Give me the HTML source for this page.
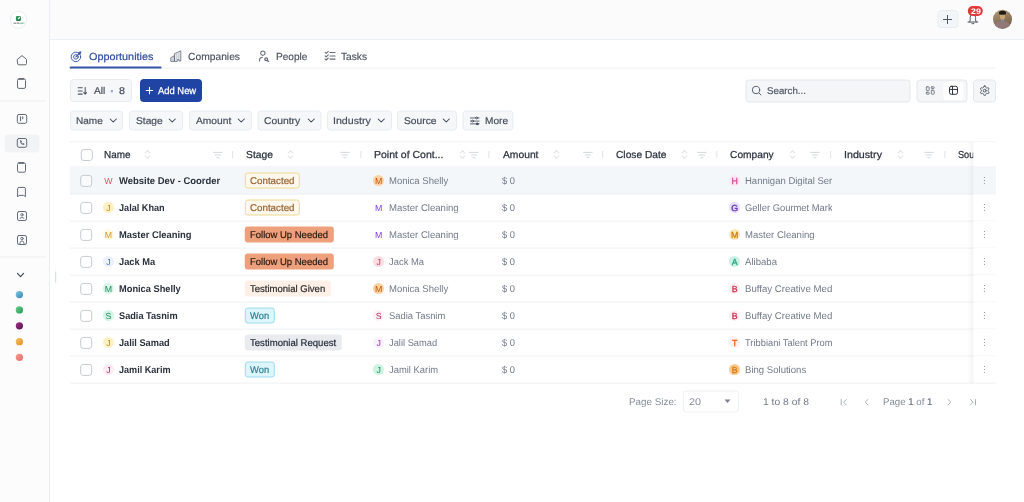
<!DOCTYPE html>
<html lang="en"><head><meta charset="utf-8"><title>Opportunities</title>
<style>
*{box-sizing:border-box;margin:0;padding:0}
html,body{width:1024px;height:502px;overflow:hidden;background:#fff}
body{position:relative;text-rendering:geometricPrecision;font-family:"Liberation Sans",Arial,sans-serif;font-size:10.2px;color:#1f2937}
.b{position:absolute;display:block}
.t{position:absolute;display:block;white-space:nowrap;line-height:14px;height:14px}
#root{position:absolute;left:0;top:0;width:1024px;height:502px;will-change:transform}
</style></head><body><div id="root">
<div class="b" style="left:50px;top:0px;width:974.00px;height:40.00px;background:#fbfbfb;border-bottom:1px solid #ebf0f4"></div>
<aside>
<div class="b" style="left:0px;top:0px;width:50.00px;height:502.00px;background:#fcfcfc;border-right:1px solid #ebeff3"></div>
<div class="b" style="left:10px;top:10px;width:17.30px;height:17.60px;transform:translate(0.00px,0.80px);border:1px solid #ebeff2;border-radius:50%;background:#fff"></div>
<div class="b" style="left:15px;top:15px;width:5.20px;height:5.00px;transform:translate(0.90px,0.90px);background:linear-gradient(135deg,#37a468,#1b6a3e);border-radius:1.2px"></div>
<svg class="b" style="left:16.50px;top:16.20px;" width="4" height="4" viewBox="0 0 4 4" fill="none" stroke="#4b5563" stroke-width="1.5" stroke-linecap="round" stroke-linejoin="round"><path d="M0.7 3.5 C0.9 1.8 1.9 0.8 3.4 0.5 C3.3 2.2 2.4 3.2 0.7 3.5Z" fill="#e8f6ee" stroke="none"/></svg>
<span class="t" style="left:13.4px;top:21.1px;height:4px;line-height:4px;font-size:2.9px;font-weight:700;color:#4a4f57;letter-spacing:0.1px">zero<span style="color:#4fae7a">qur</span></span>
<svg class="b" style="left:15.60px;top:53.70px;" width="12" height="13" viewBox="0 0 12 13" fill="none" stroke="#626a76" stroke-width="1.0" stroke-linecap="round" stroke-linejoin="round"><path d="M1.5 5.3 L6 1.6 L10.5 5.3 V9.4 Q10.5 10.8 9.1 10.8 H2.9 Q1.5 10.8 1.5 9.4Z"/></svg>
<svg class="b" style="left:16.00px;top:77.40px;" width="11" height="13" viewBox="0 0 11 13" fill="none" stroke="#626a76" stroke-width="1.0" stroke-linecap="round" stroke-linejoin="round"><rect x="1.5" y="1.9" width="8" height="9.5" rx="1.5"/><path d="M3.7 1.9 H7.3" stroke-width="1.7"/></svg>
<div class="b" style="left:0px;top:100px;width:45.50px;height:1.00px;transform:translate(0.00px,0.50px);background:#e9edf0"></div>
<svg class="b" style="left:15.60px;top:113.30px;" width="12" height="12" viewBox="0 0 12 12" fill="none" stroke="#626a76" stroke-width="1.0" stroke-linecap="round" stroke-linejoin="round"><rect x="1.3" y="1.5" width="9.4" height="8.8" rx="1.6"/><path d="M4.5 3.7 V7.8 M6.7 3.7 V5.7" stroke-width="1.1"/></svg>
<div class="b" style="left:4px;top:134px;width:35.00px;height:17.50px;transform:translate(0.50px,0.50px);background:#f1f3f5;border-radius:4px"></div>
<svg class="b" style="left:15.60px;top:137.00px;" width="12" height="12" viewBox="0 0 12 12" fill="none" stroke="#626a76" stroke-width="1.0" stroke-linecap="round" stroke-linejoin="round"><rect x="1.3" y="1.5" width="9.4" height="8.8" rx="1.6"/><path d="M4.3 4 Q4.3 7.6 7.9 7.7 L8 6.8 L6.9 6.4 L6.4 6.9 Q5.4 6.5 5.1 5.5 L5.6 5 L5.2 3.9 Z" stroke-width="0.8"/></svg>
<svg class="b" style="left:16.00px;top:161.40px;" width="11" height="13" viewBox="0 0 11 13" fill="none" stroke="#626a76" stroke-width="1.0" stroke-linecap="round" stroke-linejoin="round"><rect x="1.5" y="1.9" width="8" height="9.3" rx="1.5"/><path d="M3.7 1.9 H7.3" stroke-width="1.7"/></svg>
<svg class="b" style="left:16.00px;top:185.80px;" width="11" height="12" viewBox="0 0 11 12" fill="none" stroke="#626a76" stroke-width="1.0" stroke-linecap="round" stroke-linejoin="round"><path d="M1.6 10.6 V2.8 Q1.6 1.4 3 1.4 H8 Q9.4 1.4 9.4 2.8 V10.6 L7.6 9.4 H3.4Z"/></svg>
<svg class="b" style="left:15.60px;top:209.50px;" width="12" height="12" viewBox="0 0 12 12" fill="none" stroke="#626a76" stroke-width="1.0" stroke-linecap="round" stroke-linejoin="round"><rect x="1.5" y="1.5" width="9" height="9" rx="1.6"/><circle cx="6" cy="4.8" r="1.2" stroke-width="0.9"/><path d="M4 8.2 Q6 6.4 8 8.2" stroke-width="0.9"/></svg>
<svg class="b" style="left:15.60px;top:233.80px;" width="12" height="12" viewBox="0 0 12 12" fill="none" stroke="#626a76" stroke-width="1.0" stroke-linecap="round" stroke-linejoin="round"><rect x="1.5" y="1.5" width="9" height="9" rx="1.6"/><circle cx="6" cy="4.6" r="1.3" stroke-width="0.9"/><path d="M3.8 10 Q3.8 6.9 6 6.9 Q8.2 6.9 8.2 10" stroke-width="0.9"/></svg>
<div class="b" style="left:0px;top:256px;width:45.50px;height:1.00px;transform:translate(0.00px,0.50px);background:#e9edf0"></div>
<svg class="b" style="left:15.50px;top:271.00px;" width="9" height="8" viewBox="0 0 9 8" fill="none" stroke="#3f4753" stroke-width="1.2" stroke-linecap="round" stroke-linejoin="round"><path d="M1.5 2.4 L4.55 5.6 L7.6 2.4"/></svg>
<div class="b" style="left:55px;top:271px;width:1.20px;height:11.00px;transform:translate(0.20px,0.50px);background:#cdd6de;border-radius:1px"></div>
<svg class="b" style="left:15.00px;top:289.00px;" width="9" height="74" viewBox="0 0 9 74" fill="none" stroke="none" stroke-width="0" stroke-linecap="round" stroke-linejoin="round"><defs><linearGradient id="dg0" x1="0" y1="0" x2="1" y2="1"><stop offset="0.15" stop-color="#74c2de"/><stop offset="0.9" stop-color="#4688b8"/></linearGradient><linearGradient id="dg1" x1="0" y1="0" x2="1" y2="1"><stop offset="0.15" stop-color="#5cc987"/><stop offset="0.9" stop-color="#2c9a58"/></linearGradient><linearGradient id="dg2" x1="0" y1="0" x2="1" y2="1"><stop offset="0.15" stop-color="#93307f"/><stop offset="0.9" stop-color="#5f1852"/></linearGradient><linearGradient id="dg3" x1="0" y1="0" x2="1" y2="1"><stop offset="0.15" stop-color="#f5b856"/><stop offset="0.9" stop-color="#e5932f"/></linearGradient><linearGradient id="dg4" x1="0" y1="0" x2="1" y2="1"><stop offset="0.15" stop-color="#f3928a"/><stop offset="0.9" stop-color="#e5736c"/></linearGradient></defs><circle cx="4.4" cy="5.60" r="3.65" fill="url(#dg0)"/><circle cx="4.4" cy="20.90" r="3.65" fill="url(#dg1)"/><circle cx="4.4" cy="36.80" r="3.65" fill="url(#dg2)"/><circle cx="4.4" cy="52.70" r="3.65" fill="url(#dg3)"/><circle cx="4.4" cy="68.30" r="3.65" fill="url(#dg4)"/></svg>
</aside>
<header>
<div class="b" style="left:937px;top:10px;width:21.10px;height:18.20px;transform:translate(0.50px,0.00px);background:#f3f6f8;border:1px solid #e7ecf0;border-radius:4px"></div>
<svg class="b" style="left:942.40px;top:13.60px;" width="11" height="11" viewBox="0 0 11 11" fill="none" stroke="#4f5765" stroke-width="1.0" stroke-linecap="round" stroke-linejoin="round"><path d="M5.5 1.4 V9.6 M1.4 5.5 H9.6"/></svg>
<svg class="b" style="left:967.00px;top:11.40px;" width="12" height="14" viewBox="0 0 12 14" fill="none" stroke="#4b5563" stroke-width="1.0" stroke-linecap="round" stroke-linejoin="round"><path d="M1 11 H10.8 M2.6 11 C3.4 9.6 3.2 8.4 3.2 6.4 Q3.2 3.2 5.9 3.2 Q8.6 3.2 8.6 6.4 C8.6 8.4 8.4 9.6 9.2 11 M4.9 12.6 Q5.9 13.3 6.9 12.6"/></svg>
<div class="b" style="left:967px;top:6px;width:15.00px;height:10.10px;transform:translate(0.80px,0.00px);background:#e03a3a;border-radius:5.1px"></div>
<span class="t " style="left:970.70px;top:4.50px;font-size:8px;font-weight:700;color:#fff;transform:scaleX(1.1013);transform-origin:0 50%;">29</span>
<div class="b" style="left:993px;top:9px;width:19.20px;height:18.80px;transform:translate(0.00px,0.80px);border-radius:50%;background:linear-gradient(160deg,#b39d7c,#8a7358 55%,#6f5c48);overflow:hidden"><div class="b" style="left:2.2px;top:10.8px;width:14.6px;height:12px;border-radius:45% 45% 10% 10%;background:#927877"></div><div class="b" style="left:7.6px;top:9.4px;width:3.8px;height:2.6px;border-radius:30%;background:#6f8c98"></div><div class="b" style="left:6.9px;top:3.2px;width:5.2px;height:6.8px;border-radius:45%;background:#c8a66e"></div><div class="b" style="left:6.3px;top:0.5px;width:6.4px;height:4.4px;border-radius:50% 50% 35% 35%;background:#1f1c18"></div></div>
</header>
<main>
<nav>
<div class="b" style="left:70px;top:67px;width:925.50px;height:1.00px;transform:translate(0.00px,0.70px);background:#eef1f4"></div>
<svg class="b" style="left:70.30px;top:50.80px;" width="12" height="12" viewBox="0 0 12 12" fill="none" stroke="#3a59a8" stroke-width="0.95" stroke-linecap="round" stroke-linejoin="round"><circle cx="5.9" cy="5.9" r="4.75"/><circle cx="5.9" cy="5.9" r="2.3"/><path d="M5.9 5.9 L10.6 1.2" stroke-width="1.2"/><path d="M8.6 1.6 L8.9 3 L10.3 3.2 L11 1 Z" fill="#2f4fa0" stroke-width="0.5"/></svg>
<span class="t " style="left:88.60px;top:50.50px;font-size:10.3px;color:#2f4fa0;transform:scaleX(1.0512);transform-origin:0 50%;-webkit-text-stroke:0.2px #2f4fa0;">Opportunities</span>
<div class="b" style="left:69px;top:66px;width:92.15px;height:1.60px;transform:translate(0.60px,0.60px);background:#3354a6;border-radius:1px"></div>
<svg class="b" style="left:169.60px;top:50.20px;" width="12" height="12" viewBox="0 0 12 12" fill="none" stroke="#6b7280" stroke-width="0.85" stroke-linecap="round" stroke-linejoin="round"><path d="M0.8 11 V7.7 L4.4 5.7 V11 Z M4.4 11 V3.7 L10.8 0.9 V11 H8.9 V9.5 H7.3 V11 Z" fill="#e3e5e9"/><path d="M6.6 4.4 V8.6 M8.6 3.6 V8.2 M2.6 7.6 V10" stroke-width="0.5" stroke="#b3b8c0"/></svg>
<span class="t " style="left:187.50px;top:50.60px;font-size:10.3px;color:#4a525f;transform:scaleX(0.9981);transform-origin:0 50%;-webkit-text-stroke:0.15px #4a525f;">Companies</span>
<svg class="b" style="left:258.40px;top:50.00px;" width="12" height="12" viewBox="0 0 12 12" fill="none" stroke="#626a76" stroke-width="1.05" stroke-linecap="round" stroke-linejoin="round"><circle cx="4.85" cy="3.2" r="2.15"/><path d="M1.5 11 V10 Q1.5 7.7 4.4 7.6"/><circle cx="8.2" cy="9.3" r="1.4" stroke-width="1.25"/><path d="M9.3 10.4 L10.5 11.4" stroke-width="1.25"/></svg>
<span class="t " style="left:275.50px;top:50.60px;font-size:10.3px;color:#4a525f;transform:scaleX(0.9821);transform-origin:0 50%;-webkit-text-stroke:0.15px #4a525f;">People</span>
<svg class="b" style="left:323.80px;top:50.30px;" width="12" height="12" viewBox="0 0 12 12" fill="none" stroke="#626a76" stroke-width="0.95" stroke-linecap="round" stroke-linejoin="round"><path d="M6 2.5 H11.1 M6 6 H11.1 M6 9.1 H11.1" stroke-width="1.05"/><path d="M1.1 2.4 L2.2 3.4 L4.3 1.4 M1.1 5.9 L2.2 6.9 L4.3 4.9 M1.1 9 L2.2 10 L4.3 8" stroke-width="1.05"/></svg>
<span class="t " style="left:341.00px;top:50.60px;font-size:10.3px;color:#4a525f;transform:scaleX(0.9875);transform-origin:0 50%;-webkit-text-stroke:0.15px #4a525f;">Tasks</span>
</nav>
<section>
<div class="b" style="left:70px;top:79px;width:62.00px;height:22.50px;background:#f5f7f9;border:1px solid #e8ecf0;border-radius:3.5px"></div>
<svg class="b" style="left:76.50px;top:85.50px;" width="10" height="10" viewBox="0 0 10 10" fill="none" stroke="#4b5563" stroke-width="1.05" stroke-linecap="round" stroke-linejoin="round"><path d="M1.2 1.75 H5.2 M1.2 4.9 H5.2 M1.2 8.1 H5.2 M8.2 1.6 V8.1 M6.7 6.6 L8.2 8.1 L9.7 6.6"/></svg>
<span class="t " style="left:93.75px;top:85.10px;font-size:9.8px;color:#454d5a;transform:scaleX(1.0375);transform-origin:0 50%;-webkit-text-stroke:0.18px #454d5a;">All</span>
<span class="t " style="left:110.20px;top:84.80px;font-size:11.5px;font-weight:700;color:#8fa2c4;-webkit-text-stroke:0.4px #8fa2c4;">·</span>
<span class="t " style="left:119.00px;top:85.10px;font-size:9.8px;color:#454d5a;transform:scaleX(1.1008);transform-origin:0 50%;-webkit-text-stroke:0.18px #454d5a;">8</span>
<div class="b" style="left:140px;top:79px;width:62.00px;height:22.50px;background:#1f44a4;border-radius:4px"></div>
<svg class="b" style="left:145.10px;top:86.00px;" width="9" height="9" viewBox="0 0 9 9" fill="none" stroke="#fff" stroke-width="1.1" stroke-linecap="round" stroke-linejoin="round"><path d="M4.5 1.3 V7.7 M1.3 4.5 H7.7"/></svg>
<span class="t " style="left:158.00px;top:84.90px;font-size:9.9px;color:#fff;transform:scaleX(0.9522);transform-origin:0 50%;-webkit-text-stroke:0.25px #fff;">Add New</span>
<div class="b" style="left:745px;top:79px;width:165.00px;height:22.50px;transform:translate(0.50px,0.50px);background:#f4f6f8;border:1px solid #e3e8ec;border-radius:3.5px"></div>
<svg class="b" style="left:751.30px;top:85.00px;" width="11" height="11" viewBox="0 0 11 11" fill="none" stroke="#5b6370" stroke-width="1.0" stroke-linecap="round" stroke-linejoin="round"><circle cx="5" cy="5" r="3.7"/><path d="M7.8 7.8 L10 10"/></svg>
<span class="t " style="left:767.00px;top:85.10px;font-size:9.8px;color:#535b68;transform:scaleX(0.9944);transform-origin:0 50%;-webkit-text-stroke:0.2px #535b68;">Search...</span>
<div class="b" style="left:916px;top:79px;width:50.50px;height:22.50px;transform:translate(0.50px,0.50px);background:#f4f6f8;border:1px solid #e3e8ec;border-radius:3.5px"></div>
<div class="b" style="left:943px;top:82px;width:20.00px;height:17.50px;transform:translate(0.50px,0.00px);background:#fff;border-radius:3px"></div>
<svg class="b" style="left:925.00px;top:85.00px;" width="10" height="10" viewBox="0 0 10 10" fill="#eceef1" stroke="#6f7681" stroke-width="0.9" stroke-linecap="round" stroke-linejoin="round"><rect x="1.3" y="1.8" width="2.9" height="3.8" rx="0.7"/><rect x="6.3" y="1.8" width="2.9" height="1.7" rx="0.6"/><rect x="1.3" y="7.3" width="2.9" height="1.9" rx="0.6"/><rect x="6.3" y="5.2" width="2.9" height="4" rx="0.7"/></svg>
<svg class="b" style="left:948.00px;top:85.00px;" width="11" height="11" viewBox="0 0 11 11" fill="none" stroke="#30343b" stroke-width="1.0" stroke-linecap="round" stroke-linejoin="round"><rect x="1.5" y="1.3" width="8" height="8" rx="1.8"/><path d="M1.5 4.4 H9.5 M4.5 1.3 V9.3"/></svg>
<div class="b" style="left:973px;top:79px;width:22.50px;height:22.50px;transform:translate(0.00px,0.50px);background:#f4f6f8;border:1px solid #e3e8ec;border-radius:3.5px"></div>
<svg class="b" style="left:978.60px;top:85.10px;" width="11.4" height="11.4" viewBox="0 0 24 24" fill="none" stroke="#4b5563" stroke-width="2" stroke-linecap="round" stroke-linejoin="round"><path d="M12.22 2h-.44a2 2 0 0 0-2 2v.18a2 2 0 0 1-1 1.73l-.43.25a2 2 0 0 1-2 0l-.15-.08a2 2 0 0 0-2.73.73l-.22.38a2 2 0 0 0 .73 2.73l.15.1a2 2 0 0 1 1 1.72v.51a2 2 0 0 1-1 1.74l-.15.09a2 2 0 0 0-.73 2.73l.22.38a2 2 0 0 0 2.73.73l.15-.08a2 2 0 0 1 2 0l.43.25a2 2 0 0 1 1 1.73V20a2 2 0 0 0 2 2h.44a2 2 0 0 0 2-2v-.18a2 2 0 0 1 1-1.73l.43-.25a2 2 0 0 1 2 0l.15.08a2 2 0 0 0 2.73-.73l.22-.39a2 2 0 0 0-.73-2.73l-.15-.08a2 2 0 0 1-1-1.74v-.5a2 2 0 0 1 1-1.74l.15-.09a2 2 0 0 0 .73-2.73l-.22-.38a2 2 0 0 0-2.73-.73l-.15.08a2 2 0 0 1-2 0l-.43-.25a2 2 0 0 1-1-1.73V4a2 2 0 0 0-2-2z"/><circle cx="12" cy="12" r="3"/></svg>
<div class="b" style="left:70px;top:110px;width:53.00px;height:19.50px;transform:translate(0.00px,0.50px);background:#f5f7f9;border:1px solid #e8ecf0;border-radius:3.5px"></div>
<span class="t " style="left:76.25px;top:114.60px;font-size:9.8px;color:#454d5a;transform:scaleX(1.0232);transform-origin:0 50%;-webkit-text-stroke:0.18px #454d5a;">Name</span>
<svg class="b" style="left:109.00px;top:117.20px;" width="8.5" height="7" viewBox="0 0 8.5 7" fill="none" stroke="#374151" stroke-width="1.05" stroke-linecap="round" stroke-linejoin="round"><path d="M1.2 2 L4.25 5 L7.3 2"/></svg>
<div class="b" style="left:129px;top:110px;width:54.00px;height:19.50px;transform:translate(0.00px,0.50px);background:#f5f7f9;border:1px solid #e8ecf0;border-radius:3.5px"></div>
<span class="t " style="left:135.75px;top:114.60px;font-size:9.8px;color:#454d5a;transform:scaleX(1.0445);transform-origin:0 50%;-webkit-text-stroke:0.18px #454d5a;">Stage</span>
<svg class="b" style="left:168.25px;top:117.20px;" width="8.5" height="7" viewBox="0 0 8.5 7" fill="none" stroke="#374151" stroke-width="1.05" stroke-linecap="round" stroke-linejoin="round"><path d="M1.2 2 L4.25 5 L7.3 2"/></svg>
<div class="b" style="left:189px;top:110px;width:63.00px;height:19.50px;transform:translate(0.00px,0.50px);background:#f5f7f9;border:1px solid #e8ecf0;border-radius:3.5px"></div>
<span class="t " style="left:195.75px;top:114.60px;font-size:9.8px;color:#454d5a;transform:scaleX(1.0437);transform-origin:0 50%;-webkit-text-stroke:0.18px #454d5a;">Amount</span>
<svg class="b" style="left:237.00px;top:117.20px;" width="8.5" height="7" viewBox="0 0 8.5 7" fill="none" stroke="#374151" stroke-width="1.05" stroke-linecap="round" stroke-linejoin="round"><path d="M1.2 2 L4.25 5 L7.3 2"/></svg>
<div class="b" style="left:257px;top:110px;width:63.50px;height:19.50px;transform:translate(0.50px,0.50px);background:#f5f7f9;border:1px solid #e8ecf0;border-radius:3.5px"></div>
<span class="t " style="left:264.25px;top:114.60px;font-size:9.8px;color:#454d5a;transform:scaleX(1.0564);transform-origin:0 50%;-webkit-text-stroke:0.18px #454d5a;">Country</span>
<svg class="b" style="left:306.50px;top:117.20px;" width="8.5" height="7" viewBox="0 0 8.5 7" fill="none" stroke="#374151" stroke-width="1.05" stroke-linecap="round" stroke-linejoin="round"><path d="M1.2 2 L4.25 5 L7.3 2"/></svg>
<div class="b" style="left:327px;top:110px;width:64.50px;height:19.50px;transform:translate(0.00px,0.50px);background:#f5f7f9;border:1px solid #e8ecf0;border-radius:3.5px"></div>
<span class="t " style="left:333.25px;top:114.60px;font-size:9.8px;color:#454d5a;transform:scaleX(1.0829);transform-origin:0 50%;-webkit-text-stroke:0.18px #454d5a;">Industry</span>
<svg class="b" style="left:377.00px;top:117.20px;" width="8.5" height="7" viewBox="0 0 8.5 7" fill="none" stroke="#374151" stroke-width="1.05" stroke-linecap="round" stroke-linejoin="round"><path d="M1.2 2 L4.25 5 L7.3 2"/></svg>
<div class="b" style="left:397px;top:110px;width:60.00px;height:19.50px;transform:translate(0.00px,0.50px);background:#f5f7f9;border:1px solid #e8ecf0;border-radius:3.5px"></div>
<span class="t " style="left:403.75px;top:114.60px;font-size:9.8px;color:#454d5a;transform:scaleX(1.0466);transform-origin:0 50%;-webkit-text-stroke:0.18px #454d5a;">Source</span>
<svg class="b" style="left:442.00px;top:117.20px;" width="8.5" height="7" viewBox="0 0 8.5 7" fill="none" stroke="#374151" stroke-width="1.05" stroke-linecap="round" stroke-linejoin="round"><path d="M1.2 2 L4.25 5 L7.3 2"/></svg>
<div class="b" style="left:462px;top:110px;width:50.50px;height:19.50px;transform:translate(0.50px,0.50px);background:#f5f7f9;border:1px solid #e8ecf0;border-radius:3.5px"></div>
<svg class="b" style="left:469.80px;top:115.70px;" width="10" height="10" viewBox="0 0 10 10" fill="none" stroke="#374151" stroke-width="0.8" stroke-linecap="round" stroke-linejoin="round"><path d="M0.4 1.95 H9.1 M0.4 5.1 H9.1 M0.4 7.9 H9.1" stroke-width="0.8"/><circle cx="6.6" cy="1.95" r="0.95" fill="#f4f6f8"/><circle cx="2.6" cy="5.1" r="0.95" fill="#f4f6f8"/><circle cx="7.2" cy="7.9" r="0.95" fill="#4b5563"/></svg>
<span class="t " style="left:485.00px;top:114.60px;font-size:9.8px;color:#454d5a;transform:scaleX(1.0301);transform-origin:0 50%;-webkit-text-stroke:0.18px #454d5a;">More</span>
</section>
<section>
<div class="b" style="left:70px;top:141px;width:925.50px;height:0.90px;transform:translate(0.00px,0.30px);background:#eef1f4"></div>
<div class="b" style="left:70px;top:166px;width:925.50px;height:0.80px;transform:translate(0.00px,0.40px);background:#eef1f4"></div>
<div class="b" style="left:80px;top:149px;width:12.00px;height:11.70px;transform:translate(0.80px,0.00px);border:1px solid #c6cbd1;border-radius:3px;background:rgba(255,255,255,0.35)"></div>
<span class="t " style="left:103.75px;top:149.20px;font-size:10.1px;color:#2c333f;transform:scaleX(0.9836);transform-origin:0 50%;-webkit-text-stroke:0.25px #2c333f;">Name</span>
<svg class="b" style="left:143.75px;top:149.00px;" width="7" height="11" viewBox="0 0 7 11" fill="none" stroke="#c8cdd3" stroke-width="0.8" stroke-linecap="round" stroke-linejoin="round"><path d="M1.4 4 L3.5 1.7 L5.6 4 M1.4 7 L3.5 9.3 L5.6 7"/></svg>
<svg class="b" style="left:212.70px;top:150.60px;" width="10" height="8" viewBox="0 0 10 8" fill="none" stroke="#c8cdd3" stroke-width="0.8" stroke-linecap="round" stroke-linejoin="round"><path d="M0.6 1.4 H9.2 M2.2 4 H7.6 M3.8 6.6 H6"/></svg>
<div class="b" style="left:232px;top:151px;width:0.90px;height:7.20px;transform:translate(0.10px,0.00px);background:#dfe3e8"></div>
<span class="t " style="left:245.75px;top:149.20px;font-size:10.1px;color:#2c333f;transform:scaleX(1.0229);transform-origin:0 50%;-webkit-text-stroke:0.25px #2c333f;">Stage</span>
<svg class="b" style="left:286.50px;top:149.00px;" width="7" height="11" viewBox="0 0 7 11" fill="none" stroke="#c8cdd3" stroke-width="0.8" stroke-linecap="round" stroke-linejoin="round"><path d="M1.4 4 L3.5 1.7 L5.6 4 M1.4 7 L3.5 9.3 L5.6 7"/></svg>
<svg class="b" style="left:340.45px;top:150.60px;" width="10" height="8" viewBox="0 0 10 8" fill="none" stroke="#c8cdd3" stroke-width="0.8" stroke-linecap="round" stroke-linejoin="round"><path d="M0.6 1.4 H9.2 M2.2 4 H7.6 M3.8 6.6 H6"/></svg>
<div class="b" style="left:360px;top:151px;width:0.90px;height:7.20px;transform:translate(0.35px,0.00px);background:#dfe3e8"></div>
<span class="t " style="left:374.25px;top:149.20px;font-size:10.1px;color:#2c333f;transform:scaleX(1.0403);transform-origin:0 50%;-webkit-text-stroke:0.25px #2c333f;">Point of Cont...</span>
<svg class="b" style="left:459.00px;top:149.00px;" width="7" height="11" viewBox="0 0 7 11" fill="none" stroke="#c8cdd3" stroke-width="0.8" stroke-linecap="round" stroke-linejoin="round"><path d="M1.4 4 L3.5 1.7 L5.6 4 M1.4 7 L3.5 9.3 L5.6 7"/></svg>
<svg class="b" style="left:468.70px;top:150.60px;" width="10" height="8" viewBox="0 0 10 8" fill="none" stroke="#c8cdd3" stroke-width="0.8" stroke-linecap="round" stroke-linejoin="round"><path d="M0.6 1.4 H9.2 M2.2 4 H7.6 M3.8 6.6 H6"/></svg>
<div class="b" style="left:488px;top:151px;width:0.90px;height:7.20px;transform:translate(0.35px,0.00px);background:#dfe3e8"></div>
<span class="t " style="left:502.50px;top:149.20px;font-size:10.1px;color:#2c333f;transform:scaleX(1.0199);transform-origin:0 50%;-webkit-text-stroke:0.25px #2c333f;">Amount</span>
<svg class="b" style="left:552.50px;top:149.00px;" width="7" height="11" viewBox="0 0 7 11" fill="none" stroke="#c8cdd3" stroke-width="0.8" stroke-linecap="round" stroke-linejoin="round"><path d="M1.4 4 L3.5 1.7 L5.6 4 M1.4 7 L3.5 9.3 L5.6 7"/></svg>
<svg class="b" style="left:582.70px;top:150.60px;" width="10" height="8" viewBox="0 0 10 8" fill="none" stroke="#c8cdd3" stroke-width="0.8" stroke-linecap="round" stroke-linejoin="round"><path d="M0.6 1.4 H9.2 M2.2 4 H7.6 M3.8 6.6 H6"/></svg>
<div class="b" style="left:602px;top:151px;width:0.90px;height:7.20px;transform:translate(0.10px,0.00px);background:#dfe3e8"></div>
<span class="t " style="left:616.25px;top:149.20px;font-size:10.1px;color:#2c333f;transform:scaleX(1.0107);transform-origin:0 50%;-webkit-text-stroke:0.25px #2c333f;">Close Date</span>
<svg class="b" style="left:680.50px;top:149.00px;" width="7" height="11" viewBox="0 0 7 11" fill="none" stroke="#c8cdd3" stroke-width="0.8" stroke-linecap="round" stroke-linejoin="round"><path d="M1.4 4 L3.5 1.7 L5.6 4 M1.4 7 L3.5 9.3 L5.6 7"/></svg>
<svg class="b" style="left:696.70px;top:150.60px;" width="10" height="8" viewBox="0 0 10 8" fill="none" stroke="#c8cdd3" stroke-width="0.8" stroke-linecap="round" stroke-linejoin="round"><path d="M0.6 1.4 H9.2 M2.2 4 H7.6 M3.8 6.6 H6"/></svg>
<div class="b" style="left:716px;top:151px;width:0.90px;height:7.20px;transform:translate(0.35px,0.00px);background:#dfe3e8"></div>
<span class="t " style="left:730.00px;top:149.20px;font-size:10.1px;color:#2c333f;transform:scaleX(1.0121);transform-origin:0 50%;-webkit-text-stroke:0.25px #2c333f;">Company</span>
<svg class="b" style="left:788.50px;top:149.00px;" width="7" height="11" viewBox="0 0 7 11" fill="none" stroke="#c8cdd3" stroke-width="0.8" stroke-linecap="round" stroke-linejoin="round"><path d="M1.4 4 L3.5 1.7 L5.6 4 M1.4 7 L3.5 9.3 L5.6 7"/></svg>
<svg class="b" style="left:810.20px;top:150.60px;" width="10" height="8" viewBox="0 0 10 8" fill="none" stroke="#c8cdd3" stroke-width="0.8" stroke-linecap="round" stroke-linejoin="round"><path d="M0.6 1.4 H9.2 M2.2 4 H7.6 M3.8 6.6 H6"/></svg>
<div class="b" style="left:830px;top:151px;width:0.90px;height:7.20px;transform:translate(0.10px,0.00px);background:#dfe3e8"></div>
<span class="t " style="left:844.25px;top:149.20px;font-size:10.1px;color:#2c333f;transform:scaleX(1.0577);transform-origin:0 50%;-webkit-text-stroke:0.25px #2c333f;">Industry</span>
<svg class="b" style="left:896.50px;top:149.00px;" width="7" height="11" viewBox="0 0 7 11" fill="none" stroke="#c8cdd3" stroke-width="0.8" stroke-linecap="round" stroke-linejoin="round"><path d="M1.4 4 L3.5 1.7 L5.6 4 M1.4 7 L3.5 9.3 L5.6 7"/></svg>
<svg class="b" style="left:924.45px;top:150.60px;" width="10" height="8" viewBox="0 0 10 8" fill="none" stroke="#c8cdd3" stroke-width="0.8" stroke-linecap="round" stroke-linejoin="round"><path d="M0.6 1.4 H9.2 M2.2 4 H7.6 M3.8 6.6 H6"/></svg>
<div class="b" style="left:944px;top:151px;width:0.90px;height:7.20px;transform:translate(0.35px,0.00px);background:#dfe3e8"></div>
<span class="t " style="left:958.00px;top:149.20px;font-size:10.1px;color:#2c333f;transform:scaleX(0.9070);transform-origin:0 50%;-webkit-text-stroke:0.25px #2c333f;width:17.20px;overflow:hidden;">Sou</span>
<div class="b" style="left:70px;top:167px;width:925.50px;height:26.60px;transform:translate(0.00px,0.20px);background:#f4f7f9"></div>
<div class="b" style="left:70px;top:193px;width:925.50px;height:0.80px;transform:translate(0.00px,0.60px);background:#eef1f4"></div>
<div class="b" style="left:80px;top:174px;width:11.70px;height:11.60px;transform:translate(0.20px,0.90px);border:1px solid #c6cbd1;border-radius:3px;background:rgba(255,255,255,0.35)"></div>
<span class="t" style="left:102.90px;top:173.60px;width:11.2px;text-align:center;font-size:8.8px;color:#e2505f;">W</span>
<span class="t " style="left:118.60px;top:174.85px;font-size:9.8px;font-weight:700;color:#2a313c;transform:scaleX(0.9655);transform-origin:0 50%;">Website Dev - Coorder</span>
<div class="b" style="left:244px;top:172px;width:55.30px;height:16.20px;transform:translate(0.80px,0.50px);background:#fcf8ee;border:1px solid #f0d88e;border-radius:3px"></div>
<span class="t " style="left:250.20px;top:174.85px;font-size:9.8px;color:#9d6230;transform:scaleX(0.9961);transform-origin:0 50%;-webkit-text-stroke:0.2px #9d6230;">Contacted</span>
<div class="b" style="left:373px;top:175px;width:11.20px;height:11.20px;background:#fbd3a4;border-radius:50%"></div>
<span class="t" style="left:373.00px;top:173.60px;width:11.2px;text-align:center;font-size:8.8px;color:#c2570c;">M</span>
<span class="t " style="left:389.00px;top:174.85px;font-size:9.8px;color:#727a89;transform:scaleX(0.9704);transform-origin:0 50%;">Monica Shelly</span>
<span class="t " style="left:502.00px;top:174.85px;font-size:9.8px;color:#727a89;transform:scaleX(0.9542);transform-origin:0 50%;">$ 0</span>
<div class="b" style="left:729px;top:175px;width:11.20px;height:11.20px;background:#fde8f1;border-radius:50%"></div>
<span class="t" style="left:729.00px;top:173.60px;width:11.2px;text-align:center;font-size:8.8px;color:#d8468e;-webkit-text-stroke:0.25px #d8468e;">H</span>
<span class="t " style="left:745.00px;top:174.85px;font-size:9.8px;color:#727a89;transform:scaleX(0.9712);transform-origin:0 50%;width:90.20px;overflow:hidden;">Hannigan Digital Ser</span>
<div class="b" style="left:70px;top:220px;width:925.50px;height:0.80px;transform:translate(0.00px,0.60px);background:#eef1f4"></div>
<div class="b" style="left:80px;top:201px;width:11.70px;height:11.60px;transform:translate(0.20px,0.90px);border:1px solid #c6cbd1;border-radius:3px;background:rgba(255,255,255,0.35)"></div>
<div class="b" style="left:102px;top:202px;width:11.20px;height:11.20px;transform:translate(0.90px,0.00px);background:#fdf0c4;border-radius:50%"></div>
<span class="t" style="left:102.90px;top:200.60px;width:11.2px;text-align:center;font-size:8.8px;color:#c48a2a;">J</span>
<span class="t " style="left:118.60px;top:201.85px;font-size:9.8px;font-weight:700;color:#2a313c;transform:scaleX(0.9302);transform-origin:0 50%;">Jalal Khan</span>
<div class="b" style="left:244px;top:199px;width:55.30px;height:16.20px;transform:translate(0.80px,0.50px);background:#fcf8ee;border:1px solid #f0d88e;border-radius:3px"></div>
<span class="t " style="left:250.20px;top:201.85px;font-size:9.8px;color:#9d6230;transform:scaleX(0.9961);transform-origin:0 50%;-webkit-text-stroke:0.2px #9d6230;">Contacted</span>
<span class="t" style="left:373.00px;top:200.60px;width:11.2px;text-align:center;font-size:8.8px;color:#7c3aed;">M</span>
<span class="t " style="left:389.00px;top:201.85px;font-size:9.8px;color:#727a89;transform:scaleX(0.9768);transform-origin:0 50%;">Master Cleaning</span>
<span class="t " style="left:502.00px;top:201.85px;font-size:9.8px;color:#727a89;transform:scaleX(0.9542);transform-origin:0 50%;">$ 0</span>
<div class="b" style="left:729px;top:202px;width:11.20px;height:11.20px;background:#e6defa;border-radius:50%"></div>
<span class="t" style="left:729.00px;top:200.60px;width:11.2px;text-align:center;font-size:8.8px;color:#5b21b6;-webkit-text-stroke:0.25px #5b21b6;">G</span>
<span class="t " style="left:745.00px;top:201.85px;font-size:9.8px;color:#727a89;transform:scaleX(0.9585);transform-origin:0 50%;width:91.39px;overflow:hidden;">Geller Gourmet Mark</span>
<div class="b" style="left:70px;top:247px;width:925.50px;height:0.80px;transform:translate(0.00px,0.60px);background:#eef1f4"></div>
<div class="b" style="left:80px;top:228px;width:11.70px;height:11.60px;transform:translate(0.20px,0.90px);border:1px solid #c6cbd1;border-radius:3px;background:rgba(255,255,255,0.35)"></div>
<div class="b" style="left:102px;top:229px;width:11.20px;height:11.20px;transform:translate(0.90px,0.00px);background:#fff8e2;border-radius:50%"></div>
<span class="t" style="left:102.90px;top:227.60px;width:11.2px;text-align:center;font-size:8.8px;color:#cf9a2e;">M</span>
<span class="t " style="left:118.60px;top:228.85px;font-size:9.8px;font-weight:700;color:#2a313c;transform:scaleX(0.9591);transform-origin:0 50%;">Master Cleaning</span>
<div class="b" style="left:244px;top:226px;width:88.80px;height:16.20px;transform:translate(0.80px,0.50px);background:#ee9f7c;border-radius:3px"></div>
<span class="t " style="left:250.20px;top:228.85px;font-size:9.8px;color:#2a1a10;transform:scaleX(0.9675);transform-origin:0 50%;-webkit-text-stroke:0.2px #2a1a10;">Follow Up Needed</span>
<span class="t" style="left:373.00px;top:227.60px;width:11.2px;text-align:center;font-size:8.8px;color:#7c3aed;">M</span>
<span class="t " style="left:389.00px;top:228.85px;font-size:9.8px;color:#727a89;transform:scaleX(0.9768);transform-origin:0 50%;">Master Cleaning</span>
<span class="t " style="left:502.00px;top:228.85px;font-size:9.8px;color:#727a89;transform:scaleX(0.9542);transform-origin:0 50%;">$ 0</span>
<div class="b" style="left:729px;top:229px;width:11.20px;height:11.20px;background:#fde9b8;border-radius:50%"></div>
<span class="t" style="left:729.00px;top:227.60px;width:11.2px;text-align:center;font-size:8.8px;color:#c97a0a;-webkit-text-stroke:0.25px #c97a0a;">M</span>
<span class="t " style="left:745.00px;top:228.85px;font-size:9.8px;color:#727a89;transform:scaleX(0.9768);transform-origin:0 50%;width:89.68px;overflow:hidden;">Master Cleaning</span>
<div class="b" style="left:70px;top:274px;width:925.50px;height:0.80px;transform:translate(0.00px,0.60px);background:#eef1f4"></div>
<div class="b" style="left:80px;top:255px;width:11.70px;height:11.60px;transform:translate(0.20px,0.90px);border:1px solid #c6cbd1;border-radius:3px;background:rgba(255,255,255,0.35)"></div>
<div class="b" style="left:102px;top:255px;width:11.20px;height:11.20px;transform:translate(0.90px,1.00px);background:#edf1fd;border-radius:50%"></div>
<span class="t" style="left:102.90px;top:254.60px;width:11.2px;text-align:center;font-size:8.8px;color:#4a6cd4;">J</span>
<span class="t " style="left:118.60px;top:255.85px;font-size:9.8px;font-weight:700;color:#2a313c;transform:scaleX(0.9492);transform-origin:0 50%;">Jack Ma</span>
<div class="b" style="left:244px;top:253px;width:88.80px;height:16.20px;transform:translate(0.80px,0.50px);background:#ee9f7c;border-radius:3px"></div>
<span class="t " style="left:250.20px;top:255.85px;font-size:9.8px;color:#2a1a10;transform:scaleX(0.9675);transform-origin:0 50%;-webkit-text-stroke:0.2px #2a1a10;">Follow Up Needed</span>
<div class="b" style="left:373px;top:255px;width:11.20px;height:11.20px;transform:translate(0.00px,1.00px);background:#fbdde3;border-radius:50%"></div>
<span class="t" style="left:373.00px;top:254.60px;width:11.2px;text-align:center;font-size:8.8px;color:#c2415a;">J</span>
<span class="t " style="left:389.00px;top:255.85px;font-size:9.8px;color:#727a89;transform:scaleX(0.9620);transform-origin:0 50%;">Jack Ma</span>
<span class="t " style="left:502.00px;top:255.85px;font-size:9.8px;color:#727a89;transform:scaleX(0.9542);transform-origin:0 50%;">$ 0</span>
<div class="b" style="left:729px;top:255px;width:11.20px;height:11.20px;transform:translate(0.00px,1.00px);background:#c9f2e4;border-radius:50%"></div>
<span class="t" style="left:729.00px;top:254.60px;width:11.2px;text-align:center;font-size:8.8px;color:#1f9d78;-webkit-text-stroke:0.25px #1f9d78;">A</span>
<span class="t " style="left:745.00px;top:255.85px;font-size:9.8px;color:#727a89;transform:scaleX(0.9788);transform-origin:0 50%;width:89.50px;overflow:hidden;">Alibaba</span>
<div class="b" style="left:70px;top:301px;width:925.50px;height:0.80px;transform:translate(0.00px,0.60px);background:#eef1f4"></div>
<div class="b" style="left:80px;top:282px;width:11.70px;height:11.60px;transform:translate(0.20px,0.90px);border:1px solid #c6cbd1;border-radius:3px;background:rgba(255,255,255,0.35)"></div>
<div class="b" style="left:102px;top:282px;width:11.20px;height:11.20px;transform:translate(0.90px,1.00px);background:#d7f5e8;border-radius:50%"></div>
<span class="t" style="left:102.90px;top:281.60px;width:11.2px;text-align:center;font-size:8.8px;color:#1f8a5c;">M</span>
<span class="t " style="left:118.60px;top:282.85px;font-size:9.8px;font-weight:700;color:#2a313c;transform:scaleX(0.9456);transform-origin:0 50%;">Monica Shelly</span>
<div class="b" style="left:244px;top:280px;width:86.00px;height:16.20px;transform:translate(0.80px,0.50px);background:#fef0e7;border-radius:3px"></div>
<span class="t " style="left:250.20px;top:282.85px;font-size:9.8px;color:#2b2b2b;transform:scaleX(0.9723);transform-origin:0 50%;-webkit-text-stroke:0.2px #2b2b2b;">Testimonial Given</span>
<div class="b" style="left:373px;top:282px;width:11.20px;height:11.20px;transform:translate(0.00px,1.00px);background:#fbd3a4;border-radius:50%"></div>
<span class="t" style="left:373.00px;top:281.60px;width:11.2px;text-align:center;font-size:8.8px;color:#c2570c;">M</span>
<span class="t " style="left:389.00px;top:282.85px;font-size:9.8px;color:#727a89;transform:scaleX(0.9704);transform-origin:0 50%;">Monica Shelly</span>
<span class="t " style="left:502.00px;top:282.85px;font-size:9.8px;color:#727a89;transform:scaleX(0.9542);transform-origin:0 50%;">$ 0</span>
<div class="b" style="left:729px;top:282px;width:11.20px;height:11.20px;transform:translate(0.00px,1.00px);background:#fdeef1;border-radius:50%"></div>
<span class="t" style="left:729.00px;top:281.60px;width:11.2px;text-align:center;font-size:8.8px;color:#c92a4a;-webkit-text-stroke:0.25px #c92a4a;">B</span>
<span class="t " style="left:745.00px;top:282.85px;font-size:9.8px;color:#727a89;transform:scaleX(0.9852);transform-origin:0 50%;width:88.91px;overflow:hidden;">Buffay Creative Med</span>
<div class="b" style="left:70px;top:328px;width:925.50px;height:0.80px;transform:translate(0.00px,0.60px);background:#eef1f4"></div>
<div class="b" style="left:80px;top:309px;width:11.70px;height:11.60px;transform:translate(0.20px,0.90px);border:1px solid #c6cbd1;border-radius:3px;background:rgba(255,255,255,0.35)"></div>
<div class="b" style="left:102px;top:309px;width:11.20px;height:11.20px;transform:translate(0.90px,1.00px);background:#d3f5e6;border-radius:50%"></div>
<span class="t" style="left:102.90px;top:308.60px;width:11.2px;text-align:center;font-size:8.8px;color:#1f8a5c;">S</span>
<span class="t " style="left:118.60px;top:309.85px;font-size:9.8px;font-weight:700;color:#2a313c;transform:scaleX(0.9383);transform-origin:0 50%;">Sadia Tasnim</span>
<div class="b" style="left:244px;top:307px;width:29.90px;height:16.20px;transform:translate(0.80px,0.50px);background:#ddf5fb;border:1px solid #9adcee;border-radius:3px"></div>
<span class="t " style="left:250.20px;top:309.85px;font-size:9.8px;color:#2f7f99;transform:scaleX(0.9563);transform-origin:0 50%;-webkit-text-stroke:0.2px #2f7f99;">Won</span>
<div class="b" style="left:373px;top:309px;width:11.20px;height:11.20px;transform:translate(0.00px,1.00px);background:#fdf1f6;border-radius:50%"></div>
<span class="t" style="left:373.00px;top:308.60px;width:11.2px;text-align:center;font-size:8.8px;color:#c2255c;">S</span>
<span class="t " style="left:389.00px;top:309.85px;font-size:9.8px;color:#727a89;transform:scaleX(0.9599);transform-origin:0 50%;">Sadia Tasnim</span>
<span class="t " style="left:502.00px;top:309.85px;font-size:9.8px;color:#727a89;transform:scaleX(0.9542);transform-origin:0 50%;">$ 0</span>
<div class="b" style="left:729px;top:309px;width:11.20px;height:11.20px;transform:translate(0.00px,1.00px);background:#fdeef1;border-radius:50%"></div>
<span class="t" style="left:729.00px;top:308.60px;width:11.2px;text-align:center;font-size:8.8px;color:#c92a4a;-webkit-text-stroke:0.25px #c92a4a;">B</span>
<span class="t " style="left:745.00px;top:309.85px;font-size:9.8px;color:#727a89;transform:scaleX(0.9852);transform-origin:0 50%;width:88.91px;overflow:hidden;">Buffay Creative Med</span>
<div class="b" style="left:70px;top:355px;width:925.50px;height:0.80px;transform:translate(0.00px,0.60px);background:#eef1f4"></div>
<div class="b" style="left:80px;top:336px;width:11.70px;height:11.60px;transform:translate(0.20px,0.90px);border:1px solid #c6cbd1;border-radius:3px;background:rgba(255,255,255,0.35)"></div>
<div class="b" style="left:102px;top:336px;width:11.20px;height:11.20px;transform:translate(0.90px,1.00px);background:#fdf0c4;border-radius:50%"></div>
<span class="t" style="left:102.90px;top:335.60px;width:11.2px;text-align:center;font-size:8.8px;color:#c48a2a;">J</span>
<span class="t " style="left:118.60px;top:336.85px;font-size:9.8px;font-weight:700;color:#2a313c;transform:scaleX(0.9401);transform-origin:0 50%;">Jalil Samad</span>
<div class="b" style="left:244px;top:334px;width:97.00px;height:16.20px;transform:translate(0.80px,0.50px);background:#e9ebef;border-radius:3px"></div>
<span class="t " style="left:250.20px;top:336.85px;font-size:9.8px;color:#1f2937;transform:scaleX(0.9768);transform-origin:0 50%;-webkit-text-stroke:0.2px #1f2937;">Testimonial Request</span>
<div class="b" style="left:373px;top:336px;width:11.20px;height:11.20px;transform:translate(0.00px,1.00px);background:#f9f1fc;border-radius:50%"></div>
<span class="t" style="left:373.00px;top:335.60px;width:11.2px;text-align:center;font-size:8.8px;color:#9c36b5;">J</span>
<span class="t " style="left:389.00px;top:336.85px;font-size:9.8px;color:#727a89;transform:scaleX(0.9515);transform-origin:0 50%;">Jalil Samad</span>
<span class="t " style="left:502.00px;top:336.85px;font-size:9.8px;color:#727a89;transform:scaleX(0.9542);transform-origin:0 50%;">$ 0</span>
<div class="b" style="left:729px;top:336px;width:11.20px;height:11.20px;transform:translate(0.00px,1.00px);background:#fff0ec;border-radius:50%"></div>
<span class="t" style="left:729.00px;top:335.60px;width:11.2px;text-align:center;font-size:8.8px;color:#e8590c;-webkit-text-stroke:0.25px #e8590c;">T</span>
<span class="t " style="left:745.00px;top:336.85px;font-size:9.8px;color:#727a89;transform:scaleX(0.9512);transform-origin:0 50%;width:92.09px;overflow:hidden;">Tribbiani Talent Prom</span>
<div class="b" style="left:70px;top:382px;width:925.50px;height:0.80px;transform:translate(0.00px,0.60px);background:#eef1f4"></div>
<div class="b" style="left:80px;top:363px;width:11.70px;height:11.60px;transform:translate(0.20px,0.90px);border:1px solid #c6cbd1;border-radius:3px;background:rgba(255,255,255,0.35)"></div>
<div class="b" style="left:102px;top:363px;width:11.20px;height:11.20px;transform:translate(0.90px,1.00px);background:#fdeaf2;border-radius:50%"></div>
<span class="t" style="left:102.90px;top:362.60px;width:11.2px;text-align:center;font-size:8.8px;color:#c2255c;">J</span>
<span class="t " style="left:118.60px;top:363.85px;font-size:9.8px;font-weight:700;color:#2a313c;transform:scaleX(0.9269);transform-origin:0 50%;">Jamil Karim</span>
<div class="b" style="left:244px;top:361px;width:29.90px;height:16.20px;transform:translate(0.80px,0.50px);background:#ddf5fb;border:1px solid #9adcee;border-radius:3px"></div>
<span class="t " style="left:250.20px;top:363.85px;font-size:9.8px;color:#2f7f99;transform:scaleX(0.9563);transform-origin:0 50%;-webkit-text-stroke:0.2px #2f7f99;">Won</span>
<div class="b" style="left:373px;top:363px;width:11.20px;height:11.20px;transform:translate(0.00px,1.00px);background:#cdf3e3;border-radius:50%"></div>
<span class="t" style="left:373.00px;top:362.60px;width:11.2px;text-align:center;font-size:8.8px;color:#1f8a5c;">J</span>
<span class="t " style="left:389.00px;top:363.85px;font-size:9.8px;color:#727a89;transform:scaleX(0.9593);transform-origin:0 50%;">Jamil Karim</span>
<span class="t " style="left:502.00px;top:363.85px;font-size:9.8px;color:#727a89;transform:scaleX(0.9542);transform-origin:0 50%;">$ 0</span>
<div class="b" style="left:729px;top:363px;width:11.20px;height:11.20px;transform:translate(0.00px,1.00px);background:#f9c98a;border-radius:50%"></div>
<span class="t" style="left:729.00px;top:362.60px;width:11.2px;text-align:center;font-size:8.8px;color:#d9730d;-webkit-text-stroke:0.25px #d9730d;">B</span>
<span class="t " style="left:745.00px;top:363.85px;font-size:9.8px;color:#727a89;transform:scaleX(0.9768);transform-origin:0 50%;width:89.68px;overflow:hidden;">Bing Solutions</span>
<div class="b" style="left:967px;top:142px;width:6.00px;height:241.20px;transform:translate(0.50px,0.20px);background:linear-gradient(90deg,rgba(0,0,0,0),rgba(0,0,0,0.045))"></div>
<div class="b" style="left:973px;top:142px;width:22.00px;height:24.20px;transform:translate(0.50px,0.20px);background:#fff"></div>
<div class="b" style="left:973px;top:167px;width:22.00px;height:26.40px;transform:translate(0.50px,0.20px);background:#f4f7f9"></div>
<div class="b" style="left:983px;top:177px;width:1.40px;height:1.40px;transform:translate(0.90px,0.00px);background:#69717e;border-radius:50%"></div>
<div class="b" style="left:983px;top:179px;width:1.40px;height:1.40px;transform:translate(0.90px,0.90px);background:#69717e;border-radius:50%"></div>
<div class="b" style="left:983px;top:182px;width:1.40px;height:1.40px;transform:translate(0.90px,0.80px);background:#69717e;border-radius:50%"></div>
<div class="b" style="left:973px;top:194px;width:22.00px;height:26.40px;transform:translate(0.50px,0.20px);background:#fff"></div>
<div class="b" style="left:983px;top:204px;width:1.40px;height:1.40px;transform:translate(0.90px,0.00px);background:#69717e;border-radius:50%"></div>
<div class="b" style="left:983px;top:206px;width:1.40px;height:1.40px;transform:translate(0.90px,0.90px);background:#69717e;border-radius:50%"></div>
<div class="b" style="left:983px;top:209px;width:1.40px;height:1.40px;transform:translate(0.90px,0.80px);background:#69717e;border-radius:50%"></div>
<div class="b" style="left:973px;top:221px;width:22.00px;height:26.40px;transform:translate(0.50px,0.20px);background:#fff"></div>
<div class="b" style="left:983px;top:231px;width:1.40px;height:1.40px;transform:translate(0.90px,0.00px);background:#69717e;border-radius:50%"></div>
<div class="b" style="left:983px;top:233px;width:1.40px;height:1.40px;transform:translate(0.90px,0.90px);background:#69717e;border-radius:50%"></div>
<div class="b" style="left:983px;top:236px;width:1.40px;height:1.40px;transform:translate(0.90px,0.80px);background:#69717e;border-radius:50%"></div>
<div class="b" style="left:973px;top:248px;width:22.00px;height:26.40px;transform:translate(0.50px,0.20px);background:#fff"></div>
<div class="b" style="left:983px;top:258px;width:1.40px;height:1.40px;transform:translate(0.90px,0.00px);background:#69717e;border-radius:50%"></div>
<div class="b" style="left:983px;top:260px;width:1.40px;height:1.40px;transform:translate(0.90px,0.90px);background:#69717e;border-radius:50%"></div>
<div class="b" style="left:983px;top:263px;width:1.40px;height:1.40px;transform:translate(0.90px,0.80px);background:#69717e;border-radius:50%"></div>
<div class="b" style="left:973px;top:275px;width:22.00px;height:26.40px;transform:translate(0.50px,0.20px);background:#fff"></div>
<div class="b" style="left:983px;top:285px;width:1.40px;height:1.40px;transform:translate(0.90px,0.00px);background:#69717e;border-radius:50%"></div>
<div class="b" style="left:983px;top:287px;width:1.40px;height:1.40px;transform:translate(0.90px,0.90px);background:#69717e;border-radius:50%"></div>
<div class="b" style="left:983px;top:290px;width:1.40px;height:1.40px;transform:translate(0.90px,0.80px);background:#69717e;border-radius:50%"></div>
<div class="b" style="left:973px;top:302px;width:22.00px;height:26.40px;transform:translate(0.50px,0.20px);background:#fff"></div>
<div class="b" style="left:983px;top:312px;width:1.40px;height:1.40px;transform:translate(0.90px,0.00px);background:#69717e;border-radius:50%"></div>
<div class="b" style="left:983px;top:314px;width:1.40px;height:1.40px;transform:translate(0.90px,0.90px);background:#69717e;border-radius:50%"></div>
<div class="b" style="left:983px;top:317px;width:1.40px;height:1.40px;transform:translate(0.90px,0.80px);background:#69717e;border-radius:50%"></div>
<div class="b" style="left:973px;top:329px;width:22.00px;height:26.40px;transform:translate(0.50px,0.20px);background:#fff"></div>
<div class="b" style="left:983px;top:339px;width:1.40px;height:1.40px;transform:translate(0.90px,0.00px);background:#69717e;border-radius:50%"></div>
<div class="b" style="left:983px;top:341px;width:1.40px;height:1.40px;transform:translate(0.90px,0.90px);background:#69717e;border-radius:50%"></div>
<div class="b" style="left:983px;top:344px;width:1.40px;height:1.40px;transform:translate(0.90px,0.80px);background:#69717e;border-radius:50%"></div>
<div class="b" style="left:973px;top:356px;width:22.00px;height:26.40px;transform:translate(0.50px,0.20px);background:#fff"></div>
<div class="b" style="left:983px;top:366px;width:1.40px;height:1.40px;transform:translate(0.90px,0.00px);background:#69717e;border-radius:50%"></div>
<div class="b" style="left:983px;top:368px;width:1.40px;height:1.40px;transform:translate(0.90px,0.90px);background:#69717e;border-radius:50%"></div>
<div class="b" style="left:983px;top:371px;width:1.40px;height:1.40px;transform:translate(0.90px,0.80px);background:#69717e;border-radius:50%"></div>
</section>
<footer>
<span class="t " style="left:629.00px;top:396.30px;font-size:9.8px;color:#858d9a;transform:scaleX(1.0043);transform-origin:0 50%;">Page Size:</span>
<div class="b" style="left:682px;top:390px;width:56.20px;height:22.10px;transform:translate(0.80px,0.50px);border:1px solid #eceff2;border-radius:3.5px;background:#fff"></div>
<span class="t " style="left:689.00px;top:396.30px;font-size:9.8px;color:#858d9a;transform:scaleX(1.1008);transform-origin:0 50%;">20</span>
<svg class="b" style="left:723.60px;top:399.30px;" width="7" height="4.4" viewBox="0 0 7 4.4" fill="none" stroke="#4b5563" stroke-width="1.5" stroke-linecap="round" stroke-linejoin="round"><path d="M0.5 0.5 H6.5 L3.5 4Z" fill="#7a8190" stroke="none"/></svg>
<span class="t " style="left:762.50px;top:396.30px;font-size:9.8px;color:#737b8a;transform:scaleX(1.0553);transform-origin:0 50%;">1 to 8 of 8</span>
<svg class="b" style="left:839.50px;top:397.60px;" width="8" height="8.4" viewBox="0 0 8 8.4" fill="none" stroke="#aab1bb" stroke-width="1.0" stroke-linecap="round" stroke-linejoin="round"><path d="M1.2 1.5 V6.9 M6.3 1.5 L3.6 4.2 L6.3 6.9"/></svg>
<svg class="b" style="left:862.80px;top:397.60px;" width="7" height="8.4" viewBox="0 0 7 8.4" fill="none" stroke="#aab1bb" stroke-width="1.0" stroke-linecap="round" stroke-linejoin="round"><path d="M4.9 1.5 L2.2 4.2 L4.9 6.9"/></svg>
<span class="t" style="left:883.4px;top:396.3px;font-size:9.8px;color:#858d9a;transform:scaleX(0.985);transform-origin:0 50%">Page <span style="color:#6b7380;-webkit-text-stroke:0.2px #6b7380">1</span> of <span style="color:#6b7380;-webkit-text-stroke:0.2px #6b7380">1</span></span>
<svg class="b" style="left:946.40px;top:397.60px;" width="7" height="8.4" viewBox="0 0 7 8.4" fill="none" stroke="#aab1bb" stroke-width="1.0" stroke-linecap="round" stroke-linejoin="round"><path d="M2.1 1.5 L4.8 4.2 L2.1 6.9"/></svg>
<svg class="b" style="left:969.20px;top:397.60px;" width="8" height="8.4" viewBox="0 0 8 8.4" fill="none" stroke="#aab1bb" stroke-width="1.0" stroke-linecap="round" stroke-linejoin="round"><path d="M6.5 1.5 V6.9 M1.4 1.5 L4.1 4.2 L1.4 6.9"/></svg>
</footer>
</main>
</div></body></html>
